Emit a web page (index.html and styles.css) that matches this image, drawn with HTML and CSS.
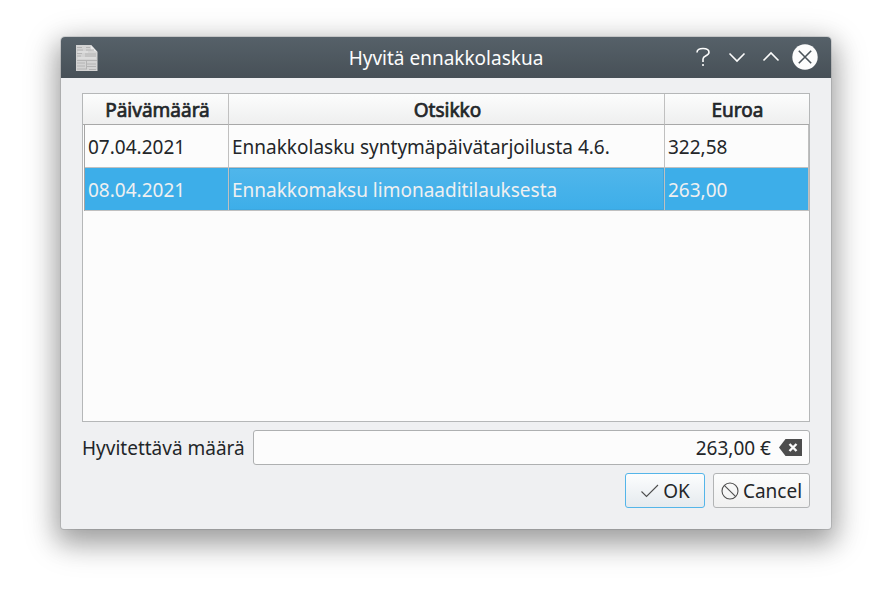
FILE: index.html
```html
<!DOCTYPE html>
<html lang="fi">
<head>
<meta charset="utf-8">
<title>Hyvitä ennakkolaskua</title>
<link rel="stylesheet" href="styles.css">
</head>
<body>
<main class="window">
  <header class="titlebar">
    <svg class="app-icon" width="22" height="26" viewBox="0 0 22 26">
      <path d="M0 0H15L21.500 7V26H0Z" fill="#d3d3d3"/>
      <path d="M15 0L21.500 7L15 5Z" fill="#e9e9e9"/>
      <path d="M1 2.500H6M10 2.500H14M1 5H7M10 5H18M1 8.500H6M9 9H20M1 11H5M9 11H20M1 15.500H21M1 18H9M11 19H20M1 21H9M11 21.500H20M1 24H11M13 24.500H20M10.500 15V24" stroke="#b4b4b4" stroke-width="1" fill="none"/>
      <path d="M2 7H12M2 13H20" stroke="#e6e6e6" fill="none"/>
    </svg>
    <h1 class="title">Hyvitä ennakkolaskua</h1>
    <div class="controls">
      <svg width="26" height="26" viewBox="0 0 26 26"><path d="M7 8.500C7 5.500 9.500 4.500 13 4.500C17 4.500 19 5.700 19 8.300C19 12 13 11.500 13 15V18M13 20V22" /></svg>
      <svg width="26" height="26" viewBox="0 0 26 26"><path d="M5.500 9.500L13 17L20.500 9.500"/></svg>
      <svg width="26" height="26" viewBox="0 0 26 26"><path d="M5.500 16.500L13 9L20.500 16.500"/></svg>
      <svg width="26" height="26" viewBox="0 0 26 26"><circle cx="13" cy="13" r="12.700" class="close-disc"/><path class="close-x" d="M6.800 6.800L19.200 19.200M19.200 6.800L6.800 19.200"/></svg>
    </div>
  </header>
  <section class="content">
    <div class="table">
      <div class="row head"><span>Päivämäärä</span><span>Otsikko</span><span>Euroa</span></div>
      <div class="row"><span>07.04.2021</span><span>Ennakkolasku syntymäpäivätarjoilusta 4.6.</span><span>322,58</span></div>
      <div class="row selected"><span>08.04.2021</span><span class="current">Ennakkomaksu limonaaditilauksesta</span><span>263,00</span></div>
    </div>
    <div class="field">
      <span class="label">Hyvitettävä määrä</span>
      <div class="input"><span>263,00 €</span>
        <svg width="23" height="17" viewBox="0 0 23 17"><path d="M0 8.500L6.500 0H23V17H6.500Z" fill="#4d4d4d"/><path d="M10.500 5L17.500 12M17.500 5L10.500 12" stroke="#fcfcfc" stroke-width="2.400"/></svg>
      </div>
    </div>
    <div class="actions">
      <div class="button ok"><svg width="18" height="18" viewBox="0 0 18 18"><path d="M.5 9.500L5.500 14.500L17 3"/></svg><span>OK</span></div>
      <div class="button cancel"><svg width="18" height="18" viewBox="0 0 18 18"><circle cx="9" cy="9" r="8"/><path d="M3.300 3.300L14.700 14.700"/></svg><span>Cancel</span></div>
    </div>
  </section>
</main>
</body>
</html>
```

FILE: styles.css
```css
* { box-sizing: border-box; }
body {
  margin: 0;
  padding: 37px 61px 0;
  height: 590px;
  overflow: hidden;
  background: #fff;
  color: #232629;
  font: 19px/26px "Noto Sans", sans-serif;
}
svg { display: block; flex: none; }
.window {
  width: 770px;
  height: 492px;
  border-radius: 4px 4px 3px 3px;
  background: #eff0f2;
  box-shadow: 0 0 0 1px rgba(70, 75, 78, .16), 0 10px 24px 4px rgba(0, 0, 0, .24), 0 10px 36px 4px rgba(0, 0, 0, .2);
}
.titlebar {
  height: 41px;
  display: grid;
  grid-template-columns: 130px 1fr 130px;
  align-items: center;
  padding: 0 13px 0 15px;
  border-radius: 4px 4px 0 0;
  background: linear-gradient(#566169, #475057);
  color: #fcfcfc;
}
.title { margin: 0; font-size: 19px; font-weight: 400; text-align: center; position: relative; left: -1px; }
.controls { display: flex; gap: 8px; justify-content: flex-end; position: relative; top: -1px; }
.controls path { fill: none; stroke: #fcfcfc; stroke-width: 1.6; }
.controls .close-disc { fill: #fcfcfc; }
.controls .close-x { stroke: #4a5359; }
.content { padding: 15px 21px 0; }
.table {
  height: 329px;
  border: 1px solid #b5b7b8;
  background: #fcfcfc;
}
.row {
  display: grid;
  grid-template-columns: 144px 436px 144px;
  height: 43px;
  margin: 0 0 0 1px;
  border-left: 1px solid #a5a5a5;
  width: 725px;
}
.row span {
  height: 43px;
  padding: 1px 0 0 3px;
  line-height: 43px;
  border-right: 1px solid #c0c0c0;
  border-bottom: 1px solid #c0c0c0;
  white-space: nowrap;
}
.row.head {
  grid-template-columns: 146px 436px 144px;
  width: auto;
  height: 31px;
  margin: 0;
  border-left: 0;
  background: linear-gradient(#fcfdfd, #eee);
}
.head span {
  height: 31px;
  padding: 1px 0 0 4px;
  line-height: 31px;
  text-align: center;
  border-bottom-color: #a8a8a8;
  -webkit-text-stroke: .7px #232629;
}
.head span:last-child { border-right: 0; padding-left: 1px; }
.head span:nth-child(2) { padding-left: 2px; }
.selected span { background: #3daee9 padding-box; color: #eff0f1; }
.selected .current {
  background: linear-gradient(#50b6eb, #3daee9) padding-box;
  box-shadow: inset 0 0 0 1px #3da7df;
}
.field { display: flex; align-items: center; justify-content: space-between; margin-top: 8px; height: 35px; }
.label { white-space: nowrap; }
.input {
  width: 557px;
  height: 35px;
  display: flex;
  align-items: center;
  justify-content: flex-end;
  gap: 8px;
  padding-right: 7px;
  border: 1px solid #aeb0b1;
  border-radius: 3px;
  background: #fcfcfc;
}
.actions { display: flex; justify-content: flex-end; gap: 8px; margin-top: 8px; }
.button {
  height: 35px;
  display: flex;
  align-items: center;
  justify-content: center;
  gap: 4px;
  border: 1px solid #b2b4b5;
  border-radius: 3px;
  background: linear-gradient(#fcfdfd, #f0f0f0);
}
.button svg { fill: none; stroke: #4d4d4d; stroke-width: 1.1; }
.ok { width: 80px; padding-left: 1px; border-color: #54b5e9; background: linear-gradient(#fcfdfe, #e5eaee); }
.cancel { width: 97px; }
```
